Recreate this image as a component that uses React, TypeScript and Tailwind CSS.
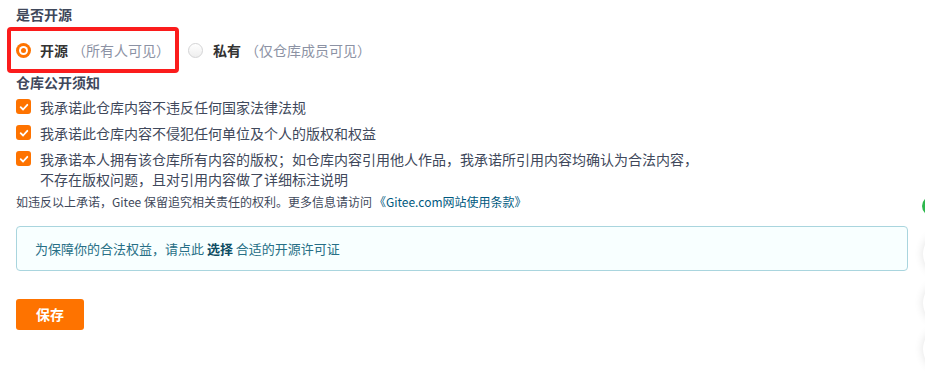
import React from 'react';

const font = { fontFamily: '"Noto Sans CJK SC", "Noto Sans", sans-serif' };

const CheckBox = () => (
  <span className="w-[15px] h-[15px] rounded-[3px] bg-[#fe7300] flex items-center justify-center shrink-0">
    <svg viewBox="0 0 12 12" className="w-[10px] h-[10px]">
      <path d="M2 6.2 L4.9 9 L10 3.4" fill="none" stroke="#fff" strokeWidth="2.2" strokeLinecap="round" strokeLinejoin="round" />
    </svg>
  </span>
);

const notices = [
  ['我承诺此仓库内容不违反任何国家法律法规'],
  ['我承诺此仓库内容不侵犯任何单位及个人的版权和权益'],
  [
    '我承诺本人拥有该仓库所有内容的版权；如仓库内容引用他人作品，我承诺所引用内容均确认为合法内容，',
    '不存在版权问题，且对引用内容做了详细标注说明',
  ],
];

const App = () => {
  return (
    <div className="relative w-[925px] h-[377px] bg-white overflow-hidden text-[#40485b]" style={font}>
      <div className="px-4 pt-[4px]">
        <div className="text-[14px] font-bold leading-[20px]">是否开源</div>

        <div className="flex items-center h-[32px] mt-[20px] -translate-y-[10px]">
          <div className="flex items-center">
            <span className="w-[15px] h-[15px] rounded-full bg-[#fe7300] flex items-center justify-center">
              <span className="w-[9px] h-[9px] rounded-full bg-white flex items-center justify-center">
                <span className="w-[5px] h-[5px] rounded-full bg-[#fe7300]" />
              </span>
            </span>
            <span className="ml-[9px] text-[14px] font-bold text-[#333]">开源</span>
            <span className="ml-[4px] text-[14px] text-[#8c92a4]">（所有人可见）</span>
          </div>
          <div className="flex items-center ml-[18px]">
            <span className="w-[15px] h-[15px] rounded-full border border-[#d4d4d5] bg-gradient-to-b from-white to-[#eeeeee]" />
            <span className="ml-[10px] text-[14px] font-bold text-[#333]">私有</span>
            <span className="ml-[4px] text-[14px] text-[#8c92a4]">（仅仓库成员可见）</span>
          </div>
        </div>

        <div className="text-[14px] font-bold leading-[20px] mt-[2px] -translate-y-[6px]">仓库公开须知</div>

        <div className="flex flex-col gap-[6px] -translate-y-[4px] mt-[3px]">
          {notices.map((lines, i) => (
            <div key={i} className="flex items-start">
              <span className="mt-[2px]">
                <CheckBox />
              </span>
              <span className="ml-[9px] text-[14px] leading-[20px] text-[#40485b]">
                {lines.map((l, j) => (
                  <React.Fragment key={j}>
                    {j > 0 && <br />}
                    {l}
                  </React.Fragment>
                ))}
              </span>
            </div>
          ))}
        </div>

        <div className="text-[12px] leading-[20px] text-[#40485b] -translate-y-[1px]">
          如违反以上承诺，Gitee 保留追究相关责任的权利。更多信息请访问
          <span className="text-[#005980] ml-[2px]">《Gitee.com网站使用条款》</span>
        </div>

        <div className="mt-[13px] w-[892px] h-[45px] rounded-[4px] border border-[#a9d5de] bg-[#f8ffff] flex items-center px-[18px] text-[13px] text-[#276f86]">
          为保障你的合法权益，请点此&nbsp;<span className="font-bold text-[#0e4d63]">选择</span>&nbsp;合适的开源许可证
        </div>

        <button className="mt-[28px] w-[68px] h-[31px] rounded-[3px] bg-[#fe7300] text-white text-[14px] font-bold flex items-center justify-center">
          保存
        </button>
      </div>

      {/* annotation frame */}
      <div className="absolute left-[7px] top-[27px] w-[172px] h-[46px] border-[4px] border-[#fb1c1c] rounded-[4px]" />

      {/* floating side toolbar, mostly off-screen */}
      <div className="absolute left-[922px] top-[196px] w-[20px] h-[20px] rounded-full bg-[#2db84d]" />
      <div className="absolute left-[923px] top-[232px] w-[44px] h-[44px] rounded-full bg-white shadow-[0_0_10px_rgba(0,0,0,0.12)]" />
      <div className="absolute left-[923px] top-[281px] w-[44px] h-[44px] rounded-full bg-white shadow-[0_0_10px_rgba(0,0,0,0.12)]" />
      <div className="absolute left-[923px] top-[327px] w-[44px] h-[44px] rounded-full bg-white shadow-[0_0_10px_rgba(0,0,0,0.12)]" />
    </div>
  );
};

export default App;
